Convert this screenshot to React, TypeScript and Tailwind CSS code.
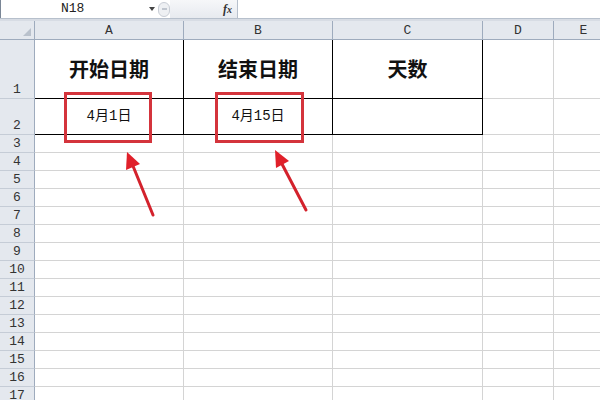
import React from "react";

const COLS = [
  { key: "A", w: 149 },
  { key: "B", w: 149 },
  { key: "C", w: 150 },
  { key: "D", w: 71 },
  { key: "E", w: 60 },
];

const mono = { fontFamily: '"Liberation Mono", "Courier New", monospace' };
const cjkMono = { fontFamily: '"Liberation Mono", "Noto Sans CJK SC", monospace' };
const cjk = { fontFamily: '"Noto Sans CJK SC", "Noto Sans", sans-serif' };

function RowHead({ n, h }: { n: number; h: number }) {
  return (
    <div
      className="w-[35px] shrink-0 bg-[#e4e8ee] border-r border-b border-r-[#9eabbd] border-b-[#c5ccd6] flex items-end justify-center text-[13px] leading-none text-[#333] pb-[2px]"
      style={{ height: h, ...mono }}
    >
      {n}
    </div>
  );
}

function Cell({
  w,
  h,
  rc = "border-r-[#d4d4d4]",
  bc = "border-b-[#d4d4d4]",
  children,
}: {
  w: number;
  h: number;
  rc?: string;
  bc?: string;
  children?: React.ReactNode;
}) {
  return (
    <div
      className={`shrink-0 border-r border-b flex items-center justify-center ${rc} ${bc}`}
      style={{ width: w, height: h }}
    >
      {children}
    </div>
  );
}

export default function App() {
  const rows = Array.from({ length: 15 }, (_, i) => i + 3);
  return (
    <div className="relative w-[600px] h-[400px] overflow-hidden bg-white">
      {/* formula bar */}
      <div className="h-[19px] flex items-stretch border-b border-[#b7c0cc] bg-white">
        <div className="w-[158px] flex items-center border-l border-[#7a8696] relative">
          <span className="ml-[60px] text-[13px] text-[#222]" style={mono}>N18</span>
          <span className="absolute left-[148px] top-[7px] w-0 h-0 border-l-[3px] border-r-[3px] border-t-[4px] border-l-transparent border-r-transparent border-t-[#444]" />
        </div>
        <div className="w-[12px] flex items-center">
          <div className="w-[13px] h-[15px] rounded-full border border-[#c9ced6] bg-[#eef0f3] flex items-center justify-center">
            <div className="w-[5px] h-[2px] bg-[#c0c6cf]" />
          </div>
        </div>
        <div className="w-[68px] bg-gradient-to-b from-[#f6f7f9] to-[#e7eaef] flex items-center justify-end pr-[5px] border-r border-[#b7c0cc]">
          <span className="text-[12px] italic font-bold text-[#333]" style={{ fontFamily: '"Liberation Serif", serif' }}>
            f<span className="text-[10px]">x</span>
          </span>
        </div>
        <div className="flex-1 bg-white" />
      </div>
      <div className="h-[2px] bg-[#d7dce4]" />

      {/* column headers */}
      <div className="flex h-[19px]">
        <div className="w-[35px] shrink-0 bg-[#e4e8ee] border-r border-b border-[#9eabbd] relative">
          <svg className="absolute right-[3px] bottom-[3px]" width="8" height="8">
            <polygon points="8,0 8,8 0,8" fill="#b9c1cc" />
          </svg>
        </div>
        {COLS.map((c) => (
          <div
            key={c.key}
            className="shrink-0 bg-[#e4e8ee] border-r border-b border-[#9eabbd] flex items-center justify-center text-[13px] text-[#333] leading-none"
            style={{ width: c.w, ...mono }}
          >
            {c.key}
          </div>
        ))}
      </div>

      {/* row 1 */}
      <div className="flex">
        <RowHead n={1} h={59} />
        <Cell w={149} h={59} rc="border-r-black" bc="border-b-black">
          <span className="text-[20px] font-bold text-[#111]" style={cjk}>开始日期</span>
        </Cell>
        <Cell w={149} h={59} rc="border-r-black" bc="border-b-black">
          <span className="text-[20px] font-bold text-[#111]" style={cjk}>结束日期</span>
        </Cell>
        <Cell w={150} h={59} rc="border-r-black" bc="border-b-black">
          <span className="text-[20px] font-bold text-[#111]" style={cjk}>天数</span>
        </Cell>
        <Cell w={71} h={59} />
        <Cell w={60} h={59} />
      </div>

      {/* row 2 */}
      <div className="flex">
        <RowHead n={2} h={36} />
        <Cell w={149} h={36} rc="border-r-black" bc="border-b-black">
          <span className="text-[14px] text-[#111]" style={cjkMono}>4月1日</span>
        </Cell>
        <Cell w={149} h={36} rc="border-r-black" bc="border-b-black">
          <span className="text-[14px] text-[#111]" style={cjkMono}>4月15日</span>
        </Cell>
        <Cell w={150} h={36} rc="border-r-black" bc="border-b-black" />
        <Cell w={71} h={36} />
        <Cell w={60} h={36} />
      </div>

      {rows.map((n) => (
        <div key={n} className="flex">
          <RowHead n={n} h={18} />
          {COLS.map((c) => (
            <Cell key={c.key} w={c.w} h={18} />
          ))}
        </div>
      ))}

      {/* annotation marks */}
      <svg className="absolute left-0 top-0 pointer-events-none" width="600" height="400">
        <g stroke="#d4343c" strokeWidth="3" fill="none">
          <rect x="65.5" y="93.5" width="85" height="48" />
          <rect x="216.5" y="93.5" width="86" height="48" />
        </g>
        <g stroke="#d3222c" strokeWidth="3" strokeLinecap="round">
          <line x1="153" y1="215" x2="133" y2="166" />
          <line x1="306" y1="210" x2="282" y2="164" />
        </g>
        <g fill="#e0202a">
          <polygon points="127,152 140,164 126,170" />
          <polygon points="275,150 289,161 276,168" />
        </g>
      </svg>
    </div>
  );
}
